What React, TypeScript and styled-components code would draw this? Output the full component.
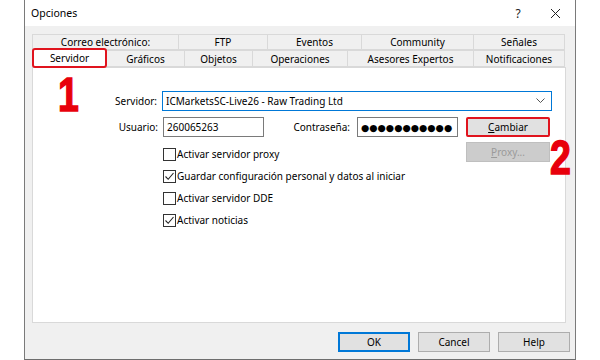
import React from "react";
import styled, { createGlobalStyle } from "styled-components";

const Global = createGlobalStyle`
  html, body { margin: 0; padding: 0; background: #ffffff; }
  body { font-family: "Noto Sans", "Open Sans", sans-serif; font-size: 10px; color: #000; }
  * { box-sizing: border-box; }
`;

const Page = styled.div`
  position: relative;
  width: 600px;
  height: 360px;
  padding: 0 24px;
  overflow: hidden;
`;

const Window = styled.div`
  width: 552px;
  height: 360px;
  display: flex;
  flex-direction: column;
  border-left: 1px solid #7a7a7a;
  border-right: 1px solid #7a7a7a;
  border-bottom: 1px solid #6d6d6d;
  background: #f0f0f0;
`;

const TitleBar = styled.div`
  height: 26px;
  background: #ffffff;
  display: flex;
  align-items: center;
  padding-left: 6px;
`;

const Title = styled.div`
  flex: 1;
  font-size: 10.5px;
`;

const TitleButton = styled.div<{ $w: number; $ml?: number; $mr?: number }>`
  width: ${(p) => p.$w}px;
  margin-left: ${(p) => p.$ml ?? 0}px;
  margin-right: ${(p) => p.$mr ?? 0}px;
  display: flex;
  justify-content: center;
  font-size: 12px;
  color: #222;
`;

const Body = styled.div`
  flex: 1;
  display: flex;
  flex-direction: column;
  padding: 8px 9px 0 7px;
`;

const TabRow = styled.div`
  display: flex;
  height: 16px;
`;

const TabRow2 = styled(TabRow)`
  height: 17px;
`;

const Tab = styled.div<{ $w: number }>`
  width: ${(p) => p.$w}px;
  display: flex;
  align-items: center;
  justify-content: center;
  border: 1px solid #d9d9d9;
  border-left-width: 0;
  background: #f0f0f0;
  white-space: nowrap;
  &:first-child { border-left-width: 1px; }
`;

const ActiveTab = styled(Tab)`
  margin-top: -2px;
  border: 2px solid #e0141e;
  border-radius: 3px;
  background: #ffffff;
  height: 20px;
  z-index: 1;
  &:first-child { border-left-width: 2px; }
`;

const Panel = styled.div`
  height: 256px;
  background: #ffffff;
  border: 1px solid #d9d9d9;
  padding-top: 23px;
  display: flex;
  flex-direction: column;
`;

const Row = styled.div<{ $mt?: number }>`
  display: flex;
  align-items: center;
  margin-top: ${(p) => p.$mt ?? 0}px;
`;

const Label = styled.div<{ $w: number; $pr?: number }>`
  width: ${(p) => p.$w}px;
  text-align: right;
  padding-right: ${(p) => p.$pr ?? 5}px;
  white-space: nowrap;
`;

const Combo = styled.div`
  width: 390px;
  height: 20px;
  border: 1px solid #0078d7;
  display: flex;
  align-items: center;
  padding: 0 6px 0 3px;
  justify-content: space-between;
`;

const Input = styled.div<{ $w: number }>`
  width: ${(p) => p.$w}px;
  height: 20px;
  border: 1px solid #7a7a7a;
  display: flex;
  align-items: center;
  padding-left: 3px;
  overflow: hidden;
  white-space: nowrap;
`;

const Dots = styled.span`
  font-size: 9.5px;
  font-family: "DejaVu Sans", sans-serif;
`;

const Button = styled.div<{ $w: number; $ml?: number }>`
  width: ${(p) => p.$w}px;
  height: 20px;
  margin-left: ${(p) => p.$ml ?? 0}px;
  background: #e1e1e1;
  border: 1px solid #adadad;
  display: flex;
  align-items: center;
  justify-content: center;
  & u { text-decoration: underline; }
`;

const RedButton = styled(Button)`
  border: 2px solid #e0141e;
  border-radius: 2px;
`;

const DisabledButton = styled(Button)`
  background: #cccccc;
  border-color: #bfbfbf;
  color: #9a9a9a;
`;

const DefaultButton = styled(Button)`
  border: 2px solid #0078d7;
`;

const Lower = styled.div`
  display: flex;
  align-items: flex-start;
  margin-top: 5px;
  padding-left: 130px;
`;

const CheckList = styled.div`
  display: flex;
  flex-direction: column;
  padding-top: 1px;
  width: 303px;
`;

const CheckRow = styled.div`
  height: 22px;
  display: flex;
  align-items: center;
  gap: 1px;
`;

const Box = styled.div`
  width: 13px;
  height: 13px;
  border: 1px solid #333333;
  background: #ffffff;
  display: flex;
  align-items: center;
  justify-content: center;
`;

const Footer = styled.div`
  flex: 1;
  display: flex;
  justify-content: flex-end;
  align-items: flex-start;
  gap: 8px;
  padding: 9px 5px 0 0;
  margin-right: -9px;
`;

const Annotation = styled.div<{ $x: number; $y: number }>`
  position: absolute;
  left: ${(p) => p.$x}px;
  top: ${(p) => p.$y}px;
  font-family: "Liberation Sans", Arial, sans-serif;
  font-weight: 700;
  font-size: 48px;
  line-height: 48px;
  color: #e8000b;
  -webkit-text-stroke: 1.5px #e8000b;
  transform: scaleX(0.78);
  transform-origin: left top;
`;

const row1 = [
  { t: "Correo electrónico:", w: 147 },
  { t: "FTP", w: 89 },
  { t: "Eventos", w: 94 },
  { t: "Community", w: 112 },
  { t: "Señales", w: 91 },
];
const row2 = [
  { t: "Gráficos", w: 78 },
  { t: "Objetos", w: 68 },
  { t: "Operaciones", w: 95 },
  { t: "Asesores Expertos", w: 126 },
  { t: "Notificaciones", w: 91 },
];

const Check = ({ checked, label }: { checked?: boolean; label: string }) => (
  <CheckRow>
    <Box>
      {checked && (
        <svg width="11" height="11" viewBox="0 0 11 11">
          <polyline points="1.5,5.5 4.2,8.3 9.5,2" fill="none" stroke="#222" strokeWidth="1.1" />
        </svg>
      )}
    </Box>
    <span>{label}</span>
  </CheckRow>
);

export default function App() {
  return (
    <>
      <Global />
      <Page>
        <Window>
          <TitleBar>
            <Title>Opciones</Title>
            <TitleButton $w={12}>?</TitleButton>
            <TitleButton $w={12} $ml={25} $mr={14}>
              <svg width="11" height="11" viewBox="0 0 11 11">
                <path d="M1 1 L10 10 M10 1 L1 10" stroke="#222" strokeWidth="1" />
              </svg>
            </TitleButton>
          </TitleBar>
          <Body>
            <TabRow>
              {row1.map((t) => (
                <Tab key={t.t} $w={t.w}>{t.t}</Tab>
              ))}
            </TabRow>
            <TabRow2>
              <ActiveTab $w={75}>Servidor</ActiveTab>
              {row2.map((t) => (
                <Tab key={t.t} $w={t.w}>{t.t}</Tab>
              ))}
            </TabRow2>
            <Panel>
              <Row>
                <Label $w={129}>Servidor:</Label>
                <Combo>
                  <span>ICMarketsSC-Live26 - Raw Trading Ltd</span>
                  <svg width="9" height="6" viewBox="0 0 9 6">
                    <polyline points="0.5,0.5 4.5,4.5 8.5,0.5" fill="none" stroke="#555" strokeWidth="1" />
                  </svg>
                </Combo>
              </Row>
              <Row $mt={6}>
                <Label $w={130}>Usuario:</Label>
                <Input $w={101}>260065263</Input>
                <Label $w={93} $pr={7}>Contraseña:</Label>
                <Input $w={101}>
                  <Dots>●●●●●●●●●●●</Dots>
                </Input>
                <RedButton $w={84} $ml={8}>
                  <span><u>C</u>ambiar</span>
                </RedButton>
              </Row>
              <Lower>
                <CheckList>
                  <Check label="Activar servidor proxy" />
                  <Check checked label="Guardar configuración personal y datos al iniciar" />
                  <Check label="Activar servidor DDE" />
                  <Check checked label="Activar noticias" />
                </CheckList>
                <DisabledButton $w={84}>
                  <span><u>P</u>roxy...</span>
                </DisabledButton>
              </Lower>
            </Panel>
            <Footer>
              <DefaultButton $w={72}>OK</DefaultButton>
              <Button $w={72}>Cancel</Button>
              <Button $w={72}>Help</Button>
            </Footer>
          </Body>
        </Window>
        <Annotation $x={58} $y={71}>1</Annotation>
        <Annotation $x={550} $y={134}>2</Annotation>
      </Page>
    </>
  );
}
